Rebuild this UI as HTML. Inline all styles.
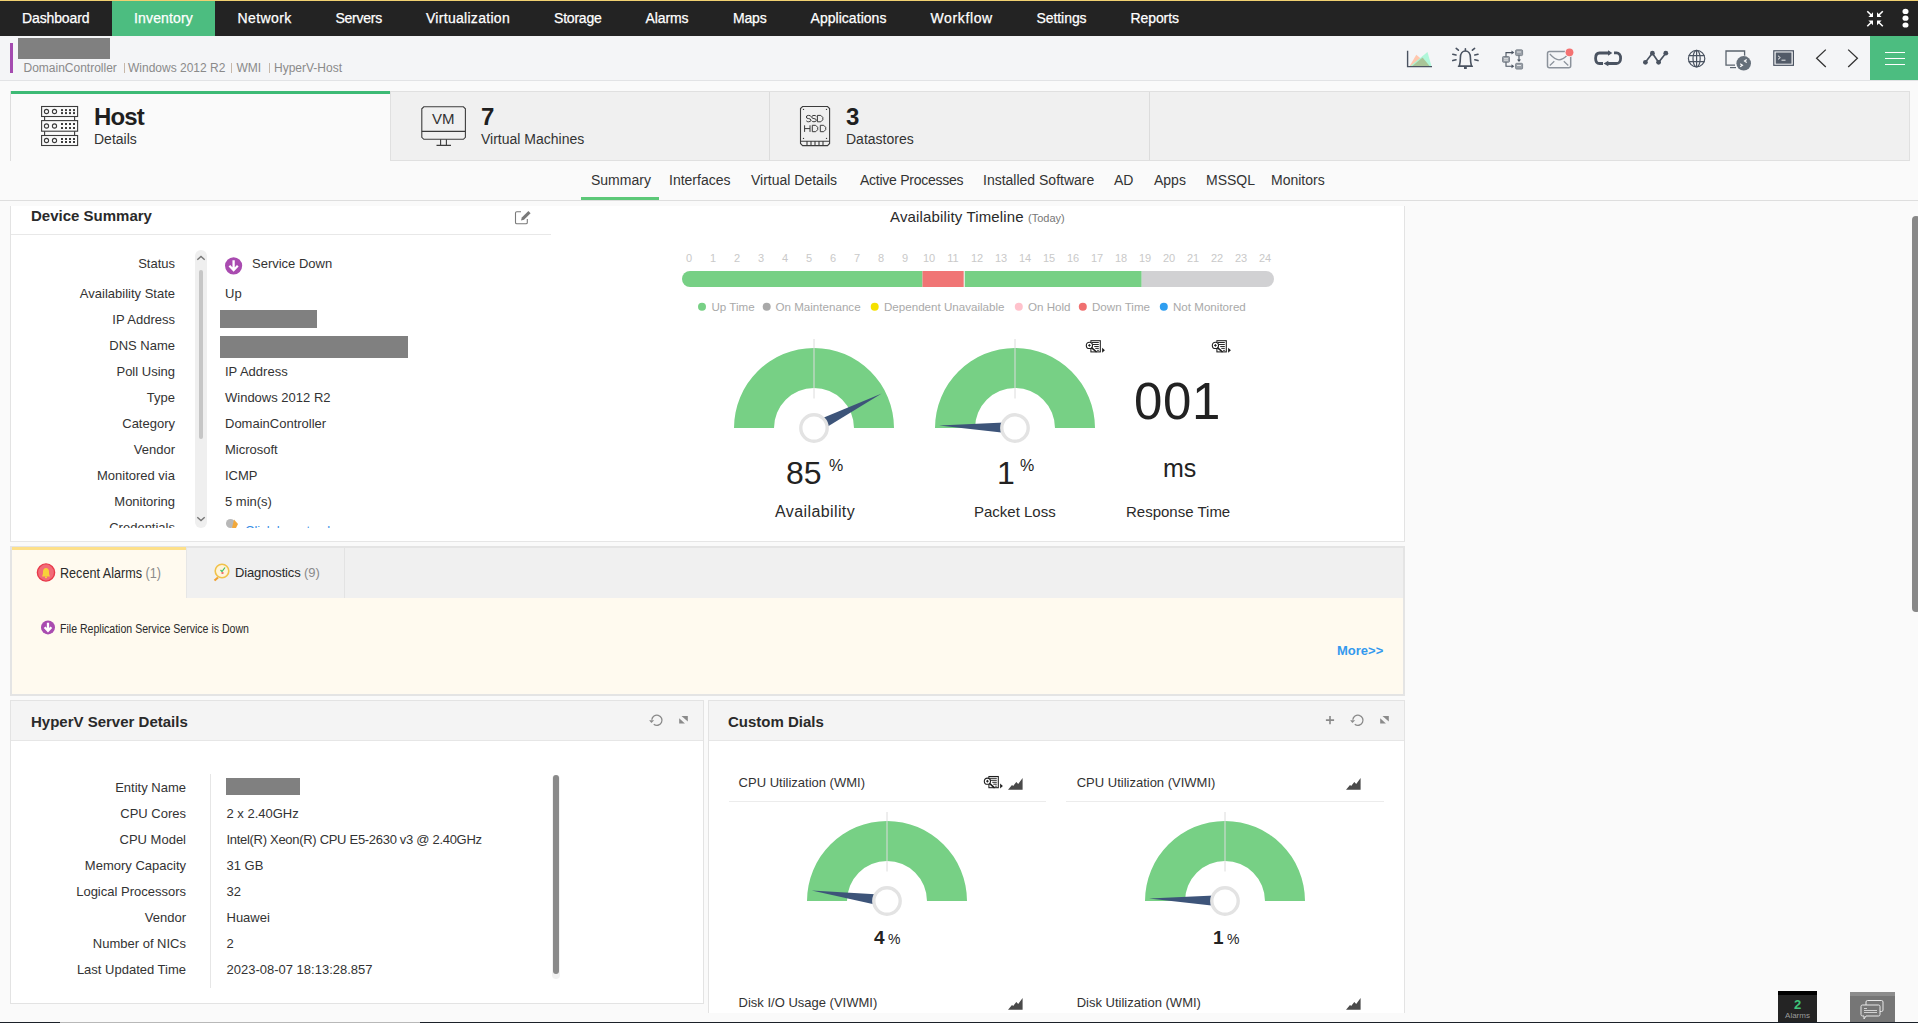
<!DOCTYPE html>
<html><head><meta charset="utf-8">
<style>
*{box-sizing:border-box;margin:0;padding:0}
html,body{width:1918px;height:1023px;overflow:hidden;background:#fafafa;font-family:"Liberation Sans",sans-serif;color:#222;position:relative}
.a{position:absolute;white-space:nowrap;line-height:1}
svg{position:absolute;overflow:visible}
#nav{position:absolute;left:0;top:0;width:1918px;height:36px;background:#232323;border-top:1px solid #f0d070}
#nav .it{position:absolute;top:0;height:35px;line-height:35px;color:#fff;font-size:14px;-webkit-text-stroke:0.25px #fff}
#nav .act{background:#4cbd80}
#hdr{position:absolute;left:0;top:36px;width:1918px;height:45px;background:#f4f5f7;border-bottom:1px solid #e2e3e5}
.lbl{position:absolute;font-size:13px;line-height:1;color:#333;text-align:right;white-space:nowrap}
.val{position:absolute;font-size:13px;line-height:1;color:#333;white-space:nowrap}
.st{position:absolute;font-size:14px;line-height:1;color:#333;white-space:nowrap}
</style></head><body>
<!-- NAV -->
<div id="nav">
  <div class="it" style="left:22px;letter-spacing:-0.13px">Dashboard</div>
  <div class="it act" style="left:112px;width:103px;text-align:center;letter-spacing:0.15px">Inventory</div>
  <div class="it" style="left:237.5px;letter-spacing:0.41px">Network</div>
  <div class="it" style="left:335.5px;letter-spacing:-0.26px">Servers</div>
  <div class="it" style="left:426px;letter-spacing:0.29px">Virtualization</div>
  <div class="it" style="left:554px;letter-spacing:-0.21px">Storage</div>
  <div class="it" style="left:645.5px;letter-spacing:-0.1px">Alarms</div>
  <div class="it" style="left:733px;letter-spacing:-0.17px">Maps</div>
  <div class="it" style="left:810.5px;letter-spacing:0.04px">Applications</div>
  <div class="it" style="left:930.5px;letter-spacing:0.63px">Workflow</div>
  <div class="it" style="left:1036.5px;letter-spacing:-0.07px">Settings</div>
  <div class="it" style="left:1130.5px;letter-spacing:-0.09px">Reports</div>
  <svg style="left:1866px;top:9.3px" width="18" height="17" viewBox="0 0 18 17">
    <g stroke="#fff" stroke-width="1.6" fill="none"><path d="M1.3 1.2L5.6 5.5M16.8 1.2L12.4 5.5M1.3 16.3L5.6 12M16.8 16.3L12.4 12"/></g>
    <g fill="#fff"><path d="M7 2.3V6.9H2.4Z"/><path d="M11 2.3V6.9H15.6Z"/><path d="M7 15.2V10.6H2.4Z"/><path d="M11 15.2V10.6H15.6Z"/></g>
  </svg>
  <svg style="left:1902px;top:6px" width="8" height="22" viewBox="0 0 8 22">
    <g fill="#fff"><ellipse cx="3.5" cy="4.4" rx="3" ry="2.6"/><ellipse cx="3.5" cy="11.2" rx="3" ry="2.6"/><ellipse cx="3.5" cy="18" rx="3" ry="2.6"/></g>
  </svg>
</div>

<!-- HEADER -->
<div id="hdr">
  <div class="a" style="left:10px;top:7px;width:3px;height:30px;background:#a44bb0"></div>
  <div class="a" style="left:18px;top:2px;width:92px;height:21px;background:#808080"></div>
  <div class="a" style="left:23.5px;top:26px;font-size:12px;color:#8a8a8a">DomainController</div>
  <div class="a" style="left:123.5px;top:27px;width:1px;height:10px;background:#c8b8a8"></div>
  <div class="a" style="left:128px;top:26px;font-size:12px;color:#8a8a8a">Windows 2012 R2</div>
  <div class="a" style="left:231px;top:27px;width:1px;height:10px;background:#c8b8a8"></div>
  <div class="a" style="left:236.5px;top:26px;font-size:12px;color:#8a8a8a">WMI</div>
  <div class="a" style="left:269px;top:27px;width:1px;height:10px;background:#c8b8a8"></div>
  <div class="a" style="left:274px;top:26px;font-size:12px;color:#8a8a8a">HyperV-Host</div>
  <div class="a" style="left:1870px;top:0;width:48px;height:44px;background:#4cbd80"></div>
  <svg style="left:1884px;top:15px" width="26" height="15" viewBox="0 0 26 15"><g stroke="#fff" stroke-width="1.2"><path d="M1 1.5H21M1 7.5H21M1 13.5H21"/></g></svg>
</div>


<!-- SUMMARY TABS -->
<div class="a" style="left:10px;top:91px;width:380px;height:70px;background:#fafafa;border-left:1px solid #ddd"></div>
<div class="a" style="left:11px;top:91px;width:379px;height:3px;background:#3dba75"></div>
<div class="a" style="left:390px;top:91px;width:1520px;height:70px;background:#f0f0f0;border:1px solid #e0e0e0"></div>
<div class="a" style="left:769px;top:92px;width:1px;height:68px;background:#dcdcdc"></div>
<div class="a" style="left:1149px;top:92px;width:1px;height:68px;background:#dcdcdc"></div>

<svg style="left:0;top:0" width="900" height="160" viewBox="0 0 900 160">
  <!-- host rack -->
  <g fill="none" stroke="#3c3c3c" stroke-width="1.1">
    <rect x="41.6" y="106.5" width="36" height="10"/>
    <rect x="41.6" y="120.6" width="36" height="10.6"/>
    <rect x="41.6" y="135.5" width="36" height="10"/>
    <path d="M44.6 116.5V120.6M74.6 116.5V120.6M44.6 131.2V135.5M74.6 131.2V135.5"/>
    <circle cx="46.5" cy="111.5" r="2.1"/><circle cx="54.5" cy="111.5" r="2.1"/>
    <circle cx="46.5" cy="126" r="2.1"/><circle cx="54.5" cy="126" r="2.1"/>
    <circle cx="46.5" cy="140.5" r="2.1"/><circle cx="54.5" cy="140.5" r="2.1"/>
  </g>
  <g fill="#3c3c3c">
    <rect x="61.0" y="109.1" width="2" height="2"/><rect x="65.0" y="109.1" width="2" height="2"/><rect x="69.0" y="109.1" width="2" height="2"/><rect x="73.0" y="109.1" width="2" height="2"/>
    <rect x="61.0" y="112.1" width="2" height="2"/><rect x="65.0" y="112.1" width="2" height="2"/><rect x="69.0" y="112.1" width="2" height="2"/><rect x="73.0" y="112.1" width="2" height="2"/>
    <rect x="61.0" y="123.0" width="2" height="2"/><rect x="65.0" y="123.0" width="2" height="2"/><rect x="69.0" y="123.0" width="2" height="2"/><rect x="73.0" y="123.0" width="2" height="2"/>
    <rect x="61.0" y="127.0" width="2" height="2"/><rect x="65.0" y="127.0" width="2" height="2"/><rect x="69.0" y="127.0" width="2" height="2"/><rect x="73.0" y="127.0" width="2" height="2"/>
    <rect x="61.0" y="138.0" width="2" height="2"/><rect x="65.0" y="138.0" width="2" height="2"/><rect x="69.0" y="138.0" width="2" height="2"/><rect x="73.0" y="138.0" width="2" height="2"/>
    <rect x="61.0" y="141.0" width="2" height="2"/><rect x="65.0" y="141.0" width="2" height="2"/><rect x="69.0" y="141.0" width="2" height="2"/><rect x="73.0" y="141.0" width="2" height="2"/>
  </g>
  <!-- VM monitor -->
  <g fill="none" stroke="#3c3c3c" stroke-width="1.1">
    <path d="M423.8 106.8H463.4L465.4 108.8V137.3L463.4 139.3H423.8L421.8 137.3V108.8Z"/>
    <path d="M421.8 131.4H465.4"/>
    <path d="M440.6 139.3V145.4M446.4 139.3V145.4M436.5 145.4H451"/>
  </g>
  <text x="443.3" y="124.2" font-family="Liberation Sans" font-size="15" fill="#333" text-anchor="middle">VM</text>
  <!-- SSD -->
  <g fill="none" stroke="#3c3c3c" stroke-width="1.1">
    <path d="M802.6 106.5H827.5L829.6 108.6V143.5L827.5 145.6H802.6L800.5 143.5V108.6Z"/>
    <path d="M800.5 141.2H829.6M807 141.2V145.6M811 141.2V145.6M815 141.2V145.6M819 141.2V145.6M823 141.2V145.6"/>
  </g>
  <g fill="#3c3c3c"><circle cx="803.5" cy="109.4" r="0.7"/><circle cx="826.5" cy="109.4" r="0.7"/><circle cx="803.5" cy="138.4" r="0.7"/><circle cx="826.5" cy="138.4" r="0.7"/></g>
  <path d="M810.9 116.4Q810.3 115.4 808.6 115.4Q806.3 115.4 806.3 117.0Q806.3 118.5 808.6 118.6Q810.9 118.7 810.9 120.2Q810.9 121.8 808.6 121.8Q806.9 121.8 806.3 120.8M816.3 116.4Q815.7 115.4 814.0 115.4Q811.7 115.4 811.7 117.0Q811.7 118.5 814.0 118.6Q816.3 118.7 816.3 120.2Q816.3 121.8 814.0 121.8Q812.3 121.8 811.7 120.8M817.4 115.4H820.8L822.8 117.4V119.8L820.8 121.8H817.4ZM804.6 125.3V131.9M810.0 125.3V131.9M804.6 128.6H810.0M812.3 125.3H815.7L817.7 127.3V129.7L815.7 131.7H812.3ZM820.3 125.3H823.7L825.7 127.3V129.7L823.7 131.7H820.3Z" fill="none" stroke="#3a3a3a" stroke-width="1"/>
  
</svg>

<div class="a" style="left:94px;top:105px;font-size:24px;font-weight:bold;color:#1f1f1f;letter-spacing:-0.9px">Host</div>
<div class="a" style="left:94px;top:132px;font-size:14px;color:#333">Details</div>
<div class="a" style="left:481px;top:105px;font-size:24px;font-weight:bold;color:#1f1f1f">7</div>
<div class="a" style="left:481px;top:132px;font-size:14px;color:#333">Virtual Machines</div>
<div class="a" style="left:846px;top:105px;font-size:24px;font-weight:bold;color:#1f1f1f">3</div>
<div class="a" style="left:846px;top:132px;font-size:14px;color:#333">Datastores</div>

<!-- SUBTABS -->
<div class="a" style="left:0;top:200px;width:1918px;height:1px;background:#dedede"></div>
<div class="a" style="left:581px;top:197px;width:78px;height:3px;background:#5cc878"></div>
<div class="st" style="left:591px;top:173px">Summary</div>
<div class="st" style="left:669px;top:173px">Interfaces</div>
<div class="st" style="left:751px;top:173px">Virtual Details</div>
<div class="st" style="left:860px;top:173px;letter-spacing:-0.25px">Active Processes</div>
<div class="st" style="left:983px;top:173px">Installed Software</div>
<div class="st" style="left:1114px;top:173px">AD</div>
<div class="st" style="left:1154px;top:173px">Apps</div>
<div class="st" style="left:1206px;top:173px">MSSQL</div>
<div class="st" style="left:1271px;top:173px">Monitors</div>

<!-- DEVICE SUMMARY PANEL -->
<div class="a" style="left:10px;top:206px;width:1395px;height:336px;background:#fff;border-left:1px solid #e3e3e3;border-right:1px solid #e3e3e3;border-bottom:1px solid #e6e6e6"></div>
<div class="a" style="left:11px;top:234px;width:540px;height:1px;background:#e8e8e8"></div>
<div class="a" style="left:31px;top:208px;font-size:15px;font-weight:bold;color:#2a2a2a">Device Summary</div>
<svg style="left:0;top:0" width="560" height="240" viewBox="0 0 560 240">
  <path d="M521 211.8H516.8Q515.5 211.8 515.5 213.1V222.4Q515.5 223.7 516.8 223.7H526Q527.3 223.7 527.3 222.4V219" fill="none" stroke="#7a7a7a" stroke-width="1.1"/>
  <path d="M521 220.5L521.8 217.6L528.4 211L530.6 213.2L524 219.8Z" fill="#7a7a7a"/>
</svg>
<div class="a" style="left:195px;top:250px;width:12px;height:278px;background:#efefef;border-radius:6px"></div>
<div class="a" style="left:199px;top:270px;width:4px;height:169px;background:#c6c6c6;border-radius:2px"></div>
<svg style="left:0;top:0" width="220" height="540" viewBox="0 0 220 540">
  <path d="M197.3 259.8L201 256.4L204.7 259.8" fill="none" stroke="#777" stroke-width="1.4"/>
  <path d="M197.3 517.2L201 520.6L204.7 517.2" fill="none" stroke="#777" stroke-width="1.4"/>
</svg>
<div style="position:absolute;left:11px;top:250px;width:540px;height:278px;overflow:hidden">
  <div style="position:absolute;left:-11px;top:-250px;width:600px;height:600px">
    <div class="lbl" style="right:425px;top:257px">Status</div>
    <div class="lbl" style="right:425px;top:287px">Availability State</div>
    <div class="lbl" style="right:425px;top:313px">IP Address</div>
    <div class="lbl" style="right:425px;top:339px">DNS Name</div>
    <div class="lbl" style="right:425px;top:365px">Poll Using</div>
    <div class="lbl" style="right:425px;top:391px">Type</div>
    <div class="lbl" style="right:425px;top:417px">Category</div>
    <div class="lbl" style="right:425px;top:443px">Vendor</div>
    <div class="lbl" style="right:425px;top:469px">Monitored via</div>
    <div class="lbl" style="right:425px;top:495px">Monitoring</div>
    <div class="lbl" style="right:425px;top:521px">Credentials</div>
    <div class="val" style="left:252px;top:257px">Service Down</div>
    <div class="val" style="left:225px;top:287px">Up</div>
    <div class="a" style="left:220px;top:310px;width:97px;height:18px;background:#808080"></div>
    <div class="a" style="left:220px;top:336px;width:188px;height:22px;background:#808080"></div>
    <div class="val" style="left:225px;top:365px">IP Address</div>
    <div class="val" style="left:225px;top:391px">Windows 2012 R2</div>
    <div class="val" style="left:225px;top:417px">DomainController</div>
    <div class="val" style="left:225px;top:443px">Microsoft</div>
    <div class="val" style="left:225px;top:469px">ICMP</div>
    <div class="val" style="left:225px;top:495px">5 min(s)</div>
    <div class="val" style="left:245px;top:524px;color:#3a8ee6">Click here to change</div>
    <svg style="left:0;top:0" width="300" height="560" viewBox="0 0 300 560">
      <circle cx="233.6" cy="265.8" r="8.6" fill="#a94bb0"/>
      <path d="M233.6 260.2V270M229.4 265.8L233.6 270.2L237.8 265.8" stroke="#fff" stroke-width="2.3" fill="none" stroke-linejoin="miter"/>
      <circle cx="230.5" cy="523.5" r="4.5" fill="#b8b8b8"/>
      <path d="M234 519.5L238 524L236 528H232Z" fill="#f2a83a"/>
    </svg>
  </div>
</div>

<!-- AVAILABILITY TIMELINE -->
<div class="a" style="left:890px;top:209px;font-size:15px;color:#2a2a2a;letter-spacing:0.15px">Availability Timeline <span style="font-size:11px;color:#777;letter-spacing:0">(Today)</span></div>
<svg style="left:0;top:0" width="1400" height="540" viewBox="0 0 1400 540">
  <g font-family="Liberation Sans" font-size="11" fill="#c9c9c9" text-anchor="middle"><text x="689" y="261.5">0</text><text x="713" y="261.5">1</text><text x="737" y="261.5">2</text><text x="761" y="261.5">3</text><text x="785" y="261.5">4</text><text x="809" y="261.5">5</text><text x="833" y="261.5">6</text><text x="857" y="261.5">7</text><text x="881" y="261.5">8</text><text x="905" y="261.5">9</text><text x="929" y="261.5">10</text><text x="953" y="261.5">11</text><text x="977" y="261.5">12</text><text x="1001" y="261.5">13</text><text x="1025" y="261.5">14</text><text x="1049" y="261.5">15</text><text x="1073" y="261.5">16</text><text x="1097" y="261.5">17</text><text x="1121" y="261.5">18</text><text x="1145" y="261.5">19</text><text x="1169" y="261.5">20</text><text x="1193" y="261.5">21</text><text x="1217" y="261.5">22</text><text x="1241" y="261.5">23</text><text x="1265" y="261.5">24</text></g>
  <path d="M690 271H922.5V287H690A8 8 0 0 1 690 271Z" fill="#77d085"/>
  <rect x="922.5" y="271" width="41.2" height="16" fill="#f07575"/>
  <rect x="964.7" y="271" width="177" height="16" fill="#77d085"/>
  <path d="M1141.7 271H1266A8 8 0 0 1 1266 287H1141.7Z" fill="#d1d1d3"/>
  <g fill="#77d085"><circle cx="702" cy="306.8" r="4"/></g>
  <circle cx="766.7" cy="306.8" r="4" fill="#a9a9a9"/>
  <circle cx="874.7" cy="306.8" r="4" fill="#f5e100"/>
  <circle cx="1018.8" cy="306.8" r="4" fill="#ffc2cc"/>
  <circle cx="1082.8" cy="306.8" r="4" fill="#f07070"/>
  <circle cx="1163.8" cy="306.8" r="4" fill="#2f9ef0"/>
  <g font-family="Liberation Sans" font-size="11.6" fill="#a9a9a9">
    <text x="711.5" y="311">Up Time</text>
    <text x="775.5" y="311">On Maintenance</text>
    <text x="884" y="311">Dependent Unavailable</text>
    <text x="1028" y="311">On Hold</text>
    <text x="1092" y="311">Down Time</text>
    <text x="1173" y="311">Not Monitored</text>
  </g>
  <path d="M734 428A80 80 0 0 1 894 428H854A40 40 0 0 0 774 428Z" fill="#77d085"/>
  <path d="M814 339V398.5" stroke="#dcdcdc" stroke-width="1"/>
  <path d="M811.28 422.65L881.72 393.50L816.72 433.35Z" fill="#3d5479"/>
  <circle cx="814" cy="428" r="13.2" fill="#fff" stroke="#e3e3e3" stroke-width="3.4"/>
  <path d="M935 428A80 80 0 0 1 1095 428H1055A40 40 0 0 0 975 428Z" fill="#77d085"/>
  <path d="M1015 339V398.5" stroke="#dcdcdc" stroke-width="1"/>
  <path d="M1014.81 434.00L939.04 425.61L1015.19 422.00Z" fill="#3d5479"/>
  <circle cx="1015" cy="428" r="13.2" fill="#fff" stroke="#e3e3e3" stroke-width="3.4"/>
</svg>
<div class="a" style="left:786px;top:457px;font-size:32px;color:#222">85</div>
<div class="a" style="left:829px;top:458px;font-size:16px;color:#222">%</div>
<div class="a" style="left:775px;top:504px;font-size:16px;color:#2a2a2a;letter-spacing:0.4px">Availability</div>
<div class="a" style="left:997px;top:457px;font-size:32px;color:#222">1</div>
<div class="a" style="left:1020px;top:458px;font-size:16px;color:#222">%</div>
<div class="a" style="left:974px;top:504px;font-size:15px;color:#2a2a2a">Packet Loss</div>
<div class="a" style="left:1134px;top:376px;font-size:51px;color:#222;letter-spacing:0.6px">001</div>
<div class="a" style="left:1163px;top:456px;font-size:25px;color:#222">ms</div>
<div class="a" style="left:1126px;top:504px;font-size:15px;color:#2a2a2a">Response Time</div>

<svg style="left:0;top:0" width="1240" height="360" viewBox="0 0 1240 360">
  <g transform="translate(1082,336)">
  <rect x="8.9" y="4.7" width="9.4" height="11.2" fill="#fff" stroke="#1e1e1e" stroke-width="1.05"/>
  <path d="M10 6.5H16.8M10.6 8.5H16.8M12.3 10.5H16.8M13.3 12.4H16.8M15.2 14.4H16.8" stroke="#1e1e1e" stroke-width="0.95"/>
  <circle cx="7.4" cy="9.4" r="3.1" fill="#fff" stroke="#1e1e1e" stroke-width="1.1"/>
  <path d="M7.4 8.1V10.7M6.1 9.4H8.7" stroke="#1e1e1e" stroke-width="1"/>
  <path d="M9.4 11.6L14.6 16" stroke="#1e1e1e" stroke-width="1.6"/>
  <path d="M20.1 11.7L22.9 14.25L20.1 16.8Z" fill="#1e1e1e"/>
</g>
  <g transform="translate(1208,336)">
  <rect x="8.9" y="4.7" width="9.4" height="11.2" fill="#fff" stroke="#1e1e1e" stroke-width="1.05"/>
  <path d="M10 6.5H16.8M10.6 8.5H16.8M12.3 10.5H16.8M13.3 12.4H16.8M15.2 14.4H16.8" stroke="#1e1e1e" stroke-width="0.95"/>
  <circle cx="7.4" cy="9.4" r="3.1" fill="#fff" stroke="#1e1e1e" stroke-width="1.1"/>
  <path d="M7.4 8.1V10.7M6.1 9.4H8.7" stroke="#1e1e1e" stroke-width="1"/>
  <path d="M9.4 11.6L14.6 16" stroke="#1e1e1e" stroke-width="1.6"/>
  <path d="M20.1 11.7L22.9 14.25L20.1 16.8Z" fill="#1e1e1e"/>
</g>
</svg>

<!-- ALARMS PANEL -->
<div class="a" style="left:10px;top:546px;width:1395px;height:150px;background:#fffaef;border:2px solid #e4e4e4"></div>
<div class="a" style="left:186px;top:548px;width:1217px;height:50px;background:#f0f0f0"></div>
<div class="a" style="left:186px;top:548px;width:1px;height:50px;background:#e6e6e6"></div>
<div class="a" style="left:344px;top:548px;width:1px;height:50px;background:#e3e3e3"></div>
<div class="a" style="left:12px;top:547px;width:174px;height:3px;background:#fde08a"></div>
<svg style="left:0;top:0" width="360" height="640" viewBox="0 0 360 640">
  <circle cx="46" cy="572.5" r="8.6" fill="#f26b78" stroke="#e8394a" stroke-width="1.4"/>
  <path d="M42 576.5C42.8 575 43 573.5 43 571.5C43 569.5 44.3 568 46 568C47.7 568 49 569.5 49 571.5C49 573.5 49.2 575 50 576.5Z" fill="#f7d23a"/>
  <rect x="45" y="576.5" width="2" height="1.6" fill="#f7d23a"/>
  <circle cx="222" cy="571" r="6.8" fill="#fff4da" stroke="#f0c24a" stroke-width="1.6"/>
  <path d="M218 577.5L214.5 580.5" stroke="#f0a030" stroke-width="2.2"/>
  <path d="M220.5 570L222 571.5L225 567.5" stroke="#3cbf6a" stroke-width="1.2" fill="none"/>
  <rect x="221.5" y="572" width="2" height="2" fill="#f07070"/>
  <circle cx="48" cy="627.4" r="7" fill="#a94bb0"/>
  <path d="M48 622.8V630.2M44.6 627.3L48 630.8L51.4 627.3" stroke="#fff" stroke-width="2.3" fill="none"/>
</svg>
<div class="a" style="left:60px;top:566px;font-size:14px;color:#2a2a2a;transform:scaleX(0.9);transform-origin:0 0">Recent Alarms <span style="color:#8a8a8a">(1)</span></div>
<div class="a" style="left:235px;top:566px;font-size:13px;color:#2a2a2a;letter-spacing:-0.15px">Diagnostics <span style="color:#8a8a8a;letter-spacing:0">(9)</span></div>
<div class="a" style="left:60px;top:622.5px;font-size:12px;color:#2a2a2a;transform:scaleX(0.88);transform-origin:0 0">File Replication Service Service is Down</div>
<div class="a" style="left:1337px;top:644px;font-size:13px;font-weight:bold;color:#3399ee">More&gt;&gt;</div>

<!-- HYPERV PANEL -->
<div class="a" style="left:10px;top:700px;width:694px;height:304px;background:#fff;border:1px solid #e3e3e3"></div>
<div class="a" style="left:11px;top:701px;width:692px;height:40px;background:#f4f4f4;border-bottom:1px solid #e6e6e6"></div>
<div class="a" style="left:31px;top:714px;font-size:15px;font-weight:bold;color:#2a2a2a">HyperV Server Details</div>
<div class="a" style="left:210px;top:774px;width:1px;height:214px;background:#e6e6e6"></div>
<div class="a" style="left:552px;top:775px;width:8px;height:204px;background:#f2f2f2;border-radius:4px"></div>
<div class="a" style="left:553px;top:775px;width:6px;height:199px;background:#8a8a8a;border-radius:3px"></div>
<div class="lbl" style="right:1732px;top:781px">Entity Name</div>
<div class="lbl" style="right:1732px;top:807px">CPU Cores</div>
<div class="lbl" style="right:1732px;top:833px">CPU Model</div>
<div class="lbl" style="right:1732px;top:859px">Memory Capacity</div>
<div class="lbl" style="right:1732px;top:885px">Logical Processors</div>
<div class="lbl" style="right:1732px;top:911px">Vendor</div>
<div class="lbl" style="right:1732px;top:937px">Number of NICs</div>
<div class="lbl" style="right:1732px;top:963px">Last Updated Time</div>
<div class="a" style="left:226px;top:778px;width:74px;height:17px;background:#808080"></div>
<div class="val" style="left:226.5px;top:807px">2 x 2.40GHz</div>
<div class="val" style="left:226.5px;top:833px;letter-spacing:-0.3px">Intel(R) Xeon(R) CPU E5-2630 v3 @ 2.40GHz</div>
<div class="val" style="left:226.5px;top:859px">31 GB</div>
<div class="val" style="left:226.5px;top:885px">32</div>
<div class="val" style="left:226.5px;top:911px">Huawei</div>
<div class="val" style="left:226.5px;top:937px">2</div>
<div class="val" style="left:226.5px;top:963px">2023-08-07 18:13:28.857</div>

<!-- CUSTOM DIALS PANEL -->
<div style="position:absolute;left:708px;top:700px;width:697px;height:313px;overflow:hidden;background:#fff;border:1px solid #e3e3e3;border-bottom:0">
  <div class="a" style="left:0;top:0;width:695px;height:40px;background:#f4f4f4;border-bottom:1px solid #e6e6e6"></div>
</div>
<div class="a" style="left:728px;top:714px;font-size:15px;font-weight:bold;color:#2a2a2a">Custom Dials</div>
<div style="position:absolute;left:709px;top:741px;width:695px;height:271px;overflow:hidden">
 <div style="position:absolute;left:-709px;top:-741px;width:1420px;height:1100px">
  <div class="val" style="left:738.6px;top:776px">CPU Utilization (WMI)</div>
  <div class="val" style="left:1076.7px;top:776px">CPU Utilization (VIWMI)</div>
  <div class="a" style="left:729px;top:801px;width:317px;height:1px;background:#ececec"></div>
  <div class="a" style="left:1066px;top:801px;width:318px;height:1px;background:#ececec"></div>
  <div class="val" style="left:738.6px;top:996px">Disk I/O Usage (VIWMI)</div>
  <div class="val" style="left:1076.7px;top:996px">Disk Utilization (WMI)</div>
  <div class="a" style="left:874px;top:928px;font-size:19px;font-weight:bold;color:#222">4</div>
  <div class="a" style="left:888px;top:932px;font-size:14px;color:#222">%</div>
  <div class="a" style="left:1213px;top:928px;font-size:19px;font-weight:bold;color:#222">1</div>
  <div class="a" style="left:1227px;top:932px;font-size:14px;color:#222">%</div>
  <svg style="left:0;top:0" width="1420" height="1100" viewBox="0 0 1420 1100">
    <g transform="translate(980,771.8)">
  <rect x="8.9" y="4.7" width="9.4" height="11.2" fill="#fff" stroke="#1e1e1e" stroke-width="1.05"/>
  <path d="M10 6.5H16.8M10.6 8.5H16.8M12.3 10.5H16.8M13.3 12.4H16.8M15.2 14.4H16.8" stroke="#1e1e1e" stroke-width="0.95"/>
  <circle cx="7.4" cy="9.4" r="3.1" fill="#fff" stroke="#1e1e1e" stroke-width="1.1"/>
  <path d="M7.4 8.1V10.7M6.1 9.4H8.7" stroke="#1e1e1e" stroke-width="1"/>
  <path d="M9.4 11.6L14.6 16" stroke="#1e1e1e" stroke-width="1.6"/>
  <path d="M20.1 11.7L22.9 14.25L20.1 16.8Z" fill="#1e1e1e"/>
</g>
    <path transform="translate(1008.0,778)" d="M0 11.8L4 6.9L5.2 8L8.3 3.9L10.2 5.9L14.6 0V11.8Z" fill="#4a4a4a"/>
    <path transform="translate(1346.0,778)" d="M0 11.8L4 6.9L5.2 8L8.3 3.9L10.2 5.9L14.6 0V11.8Z" fill="#4a4a4a"/>
    <path transform="translate(1008.0,998)" d="M0 11.8L4 6.9L5.2 8L8.3 3.9L10.2 5.9L14.6 0V11.8Z" fill="#4a4a4a"/>
    <path transform="translate(1346.0,998)" d="M0 11.8L4 6.9L5.2 8L8.3 3.9L10.2 5.9L14.6 0V11.8Z" fill="#4a4a4a"/>
    <path d="M807 901A80 80 0 0 1 967 901H927A40 40 0 0 0 847 901Z" fill="#77d085"/>
  <path d="M887 812V871.5" stroke="#dcdcdc" stroke-width="1"/>
  <path d="M886.16 906.94L811.74 890.42L887.84 895.06Z" fill="#3d5479"/>
  <circle cx="887" cy="901" r="13.2" fill="#fff" stroke="#e3e3e3" stroke-width="3.4"/>
    <path d="M1145 901A80 80 0 0 1 1305 901H1265A40 40 0 0 0 1185 901Z" fill="#77d085"/>
  <path d="M1225 812V871.5" stroke="#dcdcdc" stroke-width="1"/>
  <path d="M1224.81 907.00L1149.04 898.61L1225.19 895.00Z" fill="#3d5479"/>
  <circle cx="1225" cy="901" r="13.2" fill="#fff" stroke="#e3e3e3" stroke-width="3.4"/>
  </svg>
 </div>
</div>
<svg style="left:0;top:0" width="1420" height="740" viewBox="0 0 1420 740">
  <path d="M651.82 719.81A5.1 5.1 0 1 1 653.76 724.27" fill="none" stroke="#8a8a8a" stroke-width="1.35"/>
  <path d="M649.10 720.25H654.20L651.40 722.95Z" fill="#8a8a8a"/>
  <path d="M681.5 716.1H687.8000000000001V721.6Z" fill="#8a8a8a"/>
  <path d="M679.2 718.2V723.6H684.9000000000001Z" fill="#8a8a8a"/>
  <path d="M1352.82 719.81A5.1 5.1 0 1 1 1354.76 724.27" fill="none" stroke="#8a8a8a" stroke-width="1.35"/>
  <path d="M1350.10 720.25H1355.20L1352.40 722.95Z" fill="#8a8a8a"/>
  <path d="M1382.5 716.1H1388.8V721.6Z" fill="#8a8a8a"/>
  <path d="M1380.2 718.2V723.6H1385.9Z" fill="#8a8a8a"/>
  <path d="M1330 716V724.3M1325.9 720.1H1334.1" stroke="#8a8a8a" stroke-width="1.6"/>
</svg>

<!-- RIGHT SCROLLBAR & BADGES -->
<div class="a" style="left:1912px;top:216px;width:8px;height:396px;background:#888;border-radius:4px"></div>
<div class="a" style="left:1778px;top:991px;width:39px;height:32px;background:#242424;border-top:4px solid #000"></div>
<div class="a" style="left:1778px;top:998px;width:39px;text-align:center;font-size:13px;font-weight:bold;color:#3fc47a">2</div>
<div class="a" style="left:1778px;top:1012px;width:39px;text-align:center;font-size:8px;color:#9a9a9a">Alarms</div>
<div class="a" style="left:1850px;top:992px;width:45px;height:31px;background:#767676;border-top:4px solid #8c8c8c"></div>
<svg style="left:0;top:0" width="1918" height="1023" viewBox="0 0 1918 1023">
  <g fill="#767676" stroke="#e8e8e8" stroke-width="1">
    <rect x="1866" y="1000.5" width="17" height="11" rx="1.5"/>
    <path d="M1862.5 1005H1878.5Q1880 1005 1880 1006.5V1014.5Q1880 1016 1878.5 1016H1866L1864 1019V1016H1862.5Q1861 1016 1861 1014.5V1006.5Q1861 1005 1862.5 1005Z"/>
  </g>
  <path d="M1864 1008.5H1867M1864 1010.5H1877M1864 1012.5H1877" stroke="#e8e8e8" stroke-width="0.8"/>
</svg>
<div class="a" style="left:0;top:1022px;width:1918px;height:1px;background:#1a2028"></div>
<div class="a" style="left:60px;top:1022px;width:360px;height:1px;background:#b8b8b8"></div>

<!-- TOOLBAR ICONS (page coords) -->
<svg style="left:0;top:0" width="1918" height="80" viewBox="0 0 1918 80">
  <!-- chart -->
  <path d="M1409.5 66.3L1416.3 54.8L1429.8 66.3Z" fill="#ffc7ae"/>
  <path d="M1410 66.3L1427.5 52L1431.5 66.3Z" fill="#a8f7d6" opacity="0.9"/>
  <path d="M1412 66.3L1422.6 57.5L1429.8 66.3Z" fill="#a9c598"/>
  <path d="M1407.6 50.8V66.6H1432" stroke="#4a5361" stroke-width="1.4" fill="none"/>
  <!-- bell -->
  <g stroke="#4a5361" stroke-width="1.6" fill="none" stroke-linecap="round">
    <path d="M1459.3 66.2C1460 63.5 1460.4 61 1460.4 57.5C1460.4 53.5 1462.5 51 1465.4 51C1468.3 51 1470.4 53.5 1470.4 57.5C1470.4 61 1470.8 63.5 1471.5 66.2Z"/>
    <path d="M1458.5 66.3H1472.3"/>
    <path d="M1465.4 48.8V50.5"/>
    <path d="M1456.2 48.4L1458.4 50.2M1474.6 48.4L1472.4 50.2M1452.8 54.2L1456 55M1478 54.2L1474.8 55M1452.8 60.6L1456 59.7M1478 60.6L1474.8 59.7"/>
  </g>
  <rect x="1464" y="67" width="2.8" height="2" fill="#4a5361"/>
  <!-- workflow -->
  <g fill="#9aa0a8" stroke="#6f7680" stroke-width="0.8">
    <rect x="1502.5" y="56.5" width="7" height="5.8" rx="1"/>
    <rect x="1515.6" y="49.8" width="7" height="5.8" rx="1"/>
    <rect x="1515.6" y="63.3" width="7" height="5.8" rx="1"/>
  </g>
  <g stroke="#fff" stroke-width="0.7"><path d="M1504 58.7H1508M1504 60.2H1508M1517 52H1521M1517 65.5H1521"/></g>
  <g stroke="#4a5361" stroke-width="1.1" fill="none"><path d="M1506 56.5V52.6H1512M1506 62.3V66.2H1512M1519 55.6V60"/></g>
  <g fill="#4a5361"><path d="M1511.5 50.6L1514.3 52.6L1511.5 54.6Z"/><path d="M1511.5 64.2L1514.3 66.2L1511.5 68.2Z"/><path d="M1517 59.5H1521L1519 62Z"/></g>
  <!-- mail -->
  <rect x="1547.5" y="51.6" width="23.2" height="16.2" rx="2" fill="none" stroke="#8b929b" stroke-width="1.5"/>
  <path d="M1549.8 54C1553 57.5 1556 59.8 1559 59.8C1562 59.8 1565 57.5 1567.5 55" stroke="#8b929b" stroke-width="1.2" fill="none"/>
  <path d="M1549.8 65.5L1554.3 61.2M1568.3 65.5L1563.8 61.2" stroke="#8b929b" stroke-width="1.2"/>
  <circle cx="1569.5" cy="52.3" r="4.8" fill="#f4f5f7"/>
  <circle cx="1569.5" cy="52.3" r="3.9" fill="#f47272"/>
  <!-- loop -->
  <g stroke="#4a5361" stroke-width="2.8" fill="none">
    <path d="M1603 63.5H1599.5C1597 63.5 1595.6 61.2 1595.6 58.2C1595.6 55.2 1597 53 1599.5 53H1609.5"/>
    <path d="M1614 52.9H1616.5C1619 52.9 1620.6 55.2 1620.6 58.2C1620.6 61.2 1619 63.5 1616.5 63.5H1606"/>
  </g>
  <g fill="#4a5361"><path d="M1608 50.3L1612.3 53L1608 55.8Z"/><path d="M1608.3 60.7L1603.6 63.5L1608.3 66.3Z"/></g>
  <!-- graph -->
  <path d="M1645.4 62.3L1652.4 53.2L1658.6 62.3L1665.8 53.2" stroke="#4a5361" stroke-width="1.6" fill="none"/>
  <g fill="#4a5361"><circle cx="1645.4" cy="62.3" r="2.4"/><circle cx="1652.4" cy="53.2" r="2.4"/><circle cx="1658.6" cy="62.3" r="2.4"/><circle cx="1665.8" cy="53.2" r="2.4"/></g>
  <!-- globe -->
  <g stroke="#4a5361" stroke-width="1.2" fill="none">
    <circle cx="1696.6" cy="58.6" r="8.2"/>
    <ellipse cx="1696.6" cy="58.6" rx="3.6" ry="8.2"/>
    <path d="M1696.6 50.4V66.8M1688.6 55.6H1704.6M1688.6 61.6H1704.6"/>
  </g>
  <!-- remote -->
  <path d="M1744.6 59V51H1726V65.2H1735" stroke="#5a636e" stroke-width="1.3" fill="none"/>
  <path d="M1730 67.6H1736" stroke="#5a636e" stroke-width="1.2"/>
  <circle cx="1743.7" cy="63.3" r="7.8" fill="#f4f5f7"/>
  <circle cx="1743.7" cy="63.3" r="7.3" fill="#656f7a"/>
  <path d="M1740.2 63.8L1742.5 65.2L1740.2 66.8M1746.7 59.5L1744.5 61L1746.7 62.5" stroke="#fff" stroke-width="1.1" fill="none"/>
  <!-- terminal -->
  <rect x="1773.8" y="50.8" width="19.6" height="14.5" fill="none" stroke="#4a5361" stroke-width="1.2"/>
  <rect x="1775.7" y="52.5" width="15.8" height="11.2" fill="#515a68"/>
  <path d="M1778 55.8L1780.3 57.6L1778 59.4M1781.5 60.2H1785.5" stroke="#e8eaec" stroke-width="1" fill="none"/>
  <!-- chevrons -->
  <path d="M1825.8 49.6L1816.6 58.3L1825.8 67" stroke="#333" stroke-width="1.3" fill="none"/>
  <path d="M1848.2 49.6L1857.4 58.3L1848.2 67" stroke="#333" stroke-width="1.3" fill="none"/>
</svg>
</body></html>
